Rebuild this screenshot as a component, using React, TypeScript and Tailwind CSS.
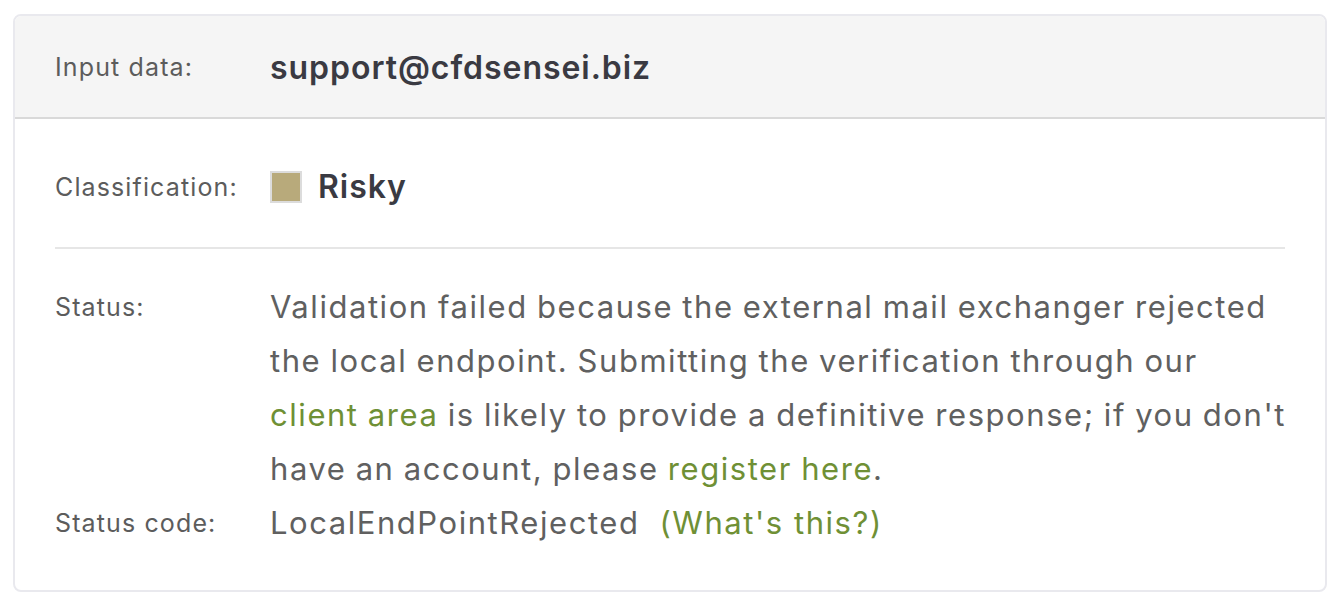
import React from 'react';

const font = { fontFamily: 'Inter, "Open Sans", sans-serif' };

const App = () => {
  return (
    <div className="min-h-screen bg-white pt-[14px] pl-[13px] pr-[7px]" style={font}>
      <div className="rounded-lg border-2 border-[#e9e9ee] overflow-hidden">
        <div className="flex h-[103px] items-center border-b-2 border-[#d9d9d9] bg-[#f5f5f5] px-10 pt-[3px]">
          <span className="w-[215px] shrink-0 text-[25px] tracking-[0.045em] text-[#5c5c5c]">Input data:</span>
          <span className="text-[32px] font-semibold tracking-[0.03em] text-[#3a3a42]">support@cfdsensei.biz</span>
        </div>

        <div className="px-10">
          <div className="flex items-center border-b-2 border-[#e6e6e6] pt-[52px] pb-[44px]">
            <span className="w-[215px] shrink-0 text-[25px] leading-[32px] tracking-[0.045em] text-[#5c5c5c]">
              Classification:
            </span>
            <span className="h-[32px] w-[32px] border-2 border-[#dcdcdc] bg-[#b8aa7b]" />
            <span className="ml-4 text-[32px] font-semibold leading-[32px] tracking-[0.03em] text-[#3a3a42]">Risky</span>
          </div>

          <div className="pt-[31px] pb-[40px] leading-[54px]">
            <div className="flex">
              <span className="w-[215px] shrink-0 text-[25px] tracking-[0.045em] text-[#5c5c5c]">Status:</span>
              <p className="mr-[-24px] text-[31px] tracking-[0.05em] text-[#606060] [word-spacing:-1px]">
                Validation failed because the external mail exchanger rejected the local endpoint. Submitting the
                verification through our <a className="whitespace-nowrap text-[#6f9035]">client area</a> is likely
                to provide a definitive response; if you don't have an account, please{' '}
                <a className="whitespace-nowrap text-[#6f9035]">register here</a>.
              </p>
            </div>
            <div className="flex">
              <span className="w-[215px] shrink-0 text-[25px] tracking-[0.045em] text-[#5c5c5c]">Status code:</span>
              <span className="text-[31px] tracking-[0.05em] text-[#606060]">LocalEndPointRejected</span>
              <a className="ml-[20px] text-[31px] tracking-[0.05em] text-[#6f9035]">(What's this?)</a>
            </div>
          </div>
        </div>
      </div>
    </div>
  );
};

export default App;
